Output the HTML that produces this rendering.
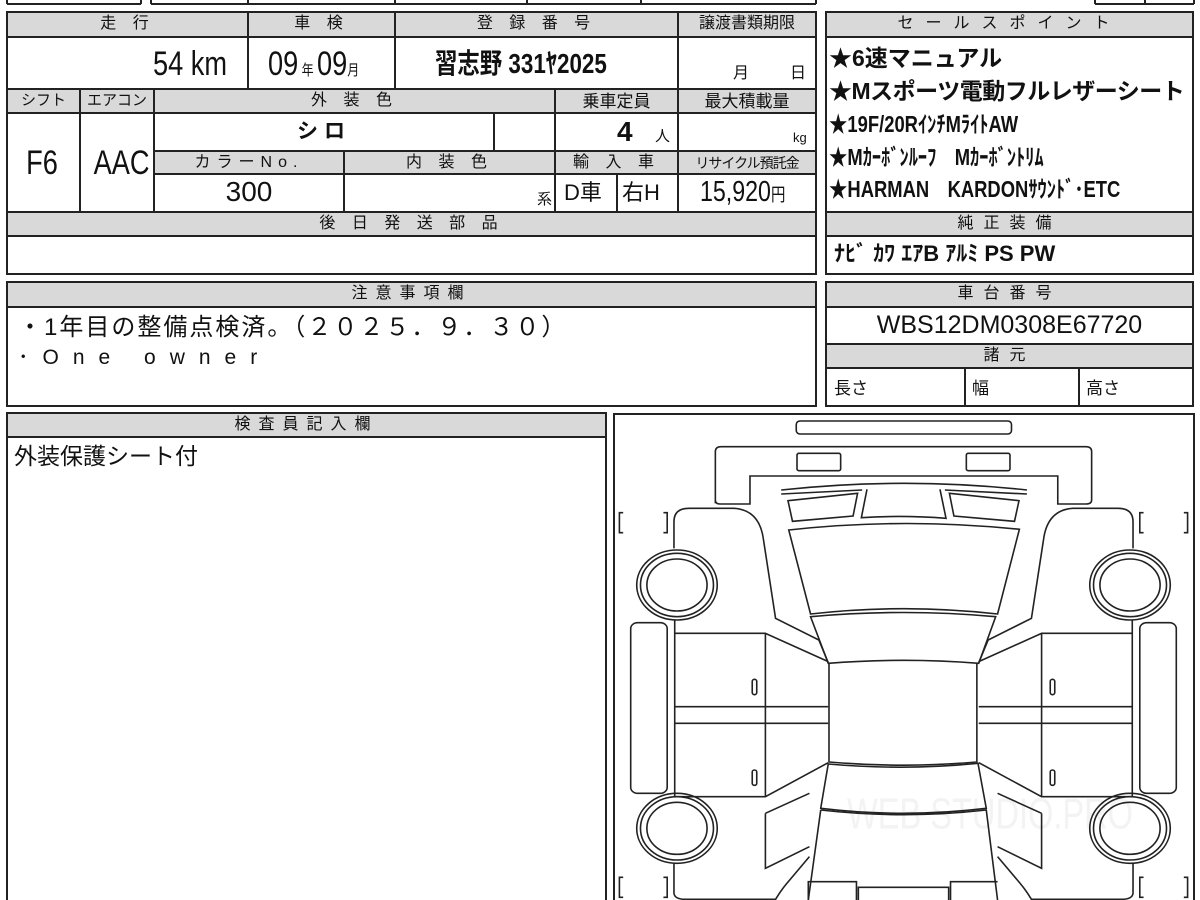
<!DOCTYPE html>
<html><head><meta charset="utf-8"><style>
body{margin:0;width:1200px;height:900px;overflow:hidden;background:#fff;position:relative;font-family:"Liberation Sans","Noto Sans CJK JP",sans-serif;color:#111}
.t{position:absolute;white-space:nowrap;line-height:1;transform-origin:0 0}
.c{text-align:center}
.h{font-size:16px;letter-spacing:6px}
.n{transform:scaleX(.8)}
</style></head><body>
<svg width="1200" height="900" style="position:absolute;left:0;top:0" xmlns="http://www.w3.org/2000/svg">
<g fill="#d9d9d9">
<rect x="7" y="12" width="809" height="25"/>
<rect x="7" y="89" width="809" height="24"/>
<rect x="154" y="151" width="662" height="23"/>
<rect x="7" y="212" width="809" height="24"/>
<rect x="826" y="12" width="367" height="25"/>
<rect x="826" y="212" width="367" height="24"/>
<rect x="826" y="282" width="367" height="25"/>
<rect x="826" y="344" width="367" height="24"/>
<rect x="7" y="282" width="809" height="25"/>
<rect x="7" y="413" width="599" height="24"/>
</g>
<g stroke="#222" stroke-width="2" fill="none">
<path d="M7,0V4M141,0V4M151,0V4M248,0V4M395,0V4M527,0V4M641,0V4M816,0V4M7,4H141M151,4H816M1095,0V4M1145,0V4M1194,0V4M1095,4H1194"/>
<rect x="7" y="12" width="809" height="262"/>
<path d="M7,37H816M7,89H816M7,113H816M154,151H816M154,174H816M7,212H816M7,236H816"/>
<path d="M248,12V89M395,12V89M678,12V212M80,89V212M154,89V212M555,89V212M494,113V151M344,151V212M617,174V212"/>
<rect x="826" y="12" width="367" height="262"/>
<path d="M826,37H1193M826,212H1193M826,236H1193"/>
<rect x="826" y="282" width="367" height="124"/>
<path d="M826,307H1193M826,344H1193M826,368H1193M965,368V406M1079,368V406"/>
<rect x="7" y="282" width="809" height="124"/>
<path d="M7,307H816"/>
<rect x="7" y="413" width="599" height="500"/>
<path d="M7,437H606"/>
<rect x="614" y="414" width="580" height="500"/>
</g>
</svg>
<svg width="590" height="490" viewBox="0 0 1568 1470" preserveAspectRatio="none" style="position:absolute;left:610px;top:410px" xmlns="http://www.w3.org/2000/svg">
<text x="630" y="1255" font-size="130" fill="#f3f3f3" font-family="Liberation Sans" textLength="760" lengthAdjust="spacingAndGlyphs">WEB STUDIO.PRO</text>
<g fill="none" stroke="#222" stroke-width="1.6">
<rect x="495" y="33" width="572" height="39" rx="10" vector-effect="non-scaling-stroke"/>
<path vector-effect="non-scaling-stroke" d="M280,280 L280,125 Q280,110 295,110 L1265,110 Q1280,110 1280,125 L1280,270 Q1280,282 1265,282 L1190,282 L1190,198 L372,198 L372,282 L292,282 Q280,282 280,270 Z"/>
<rect x="497" y="130" width="116" height="52" rx="5" vector-effect="non-scaling-stroke"/>
<rect x="947" y="130" width="116" height="52" rx="5" vector-effect="non-scaling-stroke"/>
<path vector-effect="non-scaling-stroke" d="M455,240 Q780,200 1108,240 M455,252 L670,240 M890,240 L1108,252"/>
<path vector-effect="non-scaling-stroke" d="M473,272 L658,250 L646,318 L485,334 Z M1087,272 L902,250 L914,318 L1075,334 Z"/>
<path vector-effect="non-scaling-stroke" d="M683,238 L668,323 Q780,315 893,325 L877,238"/>
<path vector-effect="non-scaling-stroke" d="M475,360 Q780,322 1088,358 L1030,612 Q780,580 533,612 Z"/>
<path vector-effect="non-scaling-stroke" d="M533,620 Q780,595 1025,620 L980,760 Q780,742 580,760 Z"/>
<path vector-effect="non-scaling-stroke" d="M582,760 L582,1056 Q780,1075 975,1056 L975,760"/>
<path vector-effect="non-scaling-stroke" d="M580,1062 Q780,1082 978,1060 L1000,1195 Q780,1225 560,1195 Z"/>
<path vector-effect="non-scaling-stroke" d="M560,1200 Q780,1228 1000,1200 L1030,1470 M560,1200 L527,1470"/>
<path vector-effect="non-scaling-stroke" d="M527,1470 V1415 H655 V1470 M905,1470 V1415 H1030 M660,1470 V1432 H900 V1470"/>
<g id="L">
<path vector-effect="non-scaling-stroke" d="M170,415 L170,335 Q170,295 210,295 L330,295 Q398,300 408,390 L440,625 L555,690 L580,758"/>
<path vector-effect="non-scaling-stroke" d="M172,670 H413 L580,755 M413,670 V1160 M172,890 H580 M172,940 H580 M172,1160 H413 L580,1058 M172,630 V1160"/>
<path vector-effect="non-scaling-stroke" d="M413,1210 L530,1150 M413,1210 V1375 L530,1310 M170,1360 V1450 Q172,1468 200,1468 L440,1468 Q455,1440 470,1420 L530,1340"/>
<rect x="55" y="638" width="97" height="512" rx="18" vector-effect="non-scaling-stroke"/>
<ellipse cx="178" cy="525" rx="107" ry="105" vector-effect="non-scaling-stroke"/>
<ellipse cx="178" cy="525" rx="97" ry="95" vector-effect="non-scaling-stroke"/>
<ellipse cx="178" cy="525" rx="80" ry="78" vector-effect="non-scaling-stroke"/>
<ellipse cx="178" cy="1255" rx="107" ry="105" vector-effect="non-scaling-stroke"/>
<ellipse cx="178" cy="1255" rx="97" ry="95" vector-effect="non-scaling-stroke"/>
<ellipse cx="178" cy="1255" rx="80" ry="78" vector-effect="non-scaling-stroke"/>
<path vector-effect="non-scaling-stroke" d="M35,308 H25 V368 H35 M142,308 H152 V368 H142 M35,1402 H25 V1462 H35 M142,1402 H152 V1462 H142"/>
<rect x="378" y="808" width="12" height="46" rx="6" vector-effect="non-scaling-stroke"/>
<rect x="378" y="1080" width="12" height="46" rx="6" vector-effect="non-scaling-stroke"/>
</g>
<use href="#L" transform="translate(1560,0) scale(-1,1)"/>
</g>
</svg>

<div class="t h c" style="left:7px;width:241px;top:16px">走 行</div>
<div class="t h c" style="left:248px;width:147px;top:16px">車 検</div>
<div class="t h c" style="left:395px;width:283px;top:16px">登 録 番 号</div>
<div class="t c" style="left:678px;width:138px;top:16px;font-size:16px">譲渡書類期限</div>
<div class="t n" style="left:153px;top:47px;font-size:34px">54 km</div>
<div class="t n" style="left:268px;top:47px;font-size:34px">09<span style="font-size:15px"> 年 </span>09<span style="font-size:15px">月</span></div>
<div class="t n" style="left:435px;top:50px;font-size:28px;font-weight:bold">習志野 331ﾔ2025</div>
<div class="t" style="left:733px;top:66px;font-size:16px">月</div>
<div class="t" style="left:790px;top:66px;font-size:16px">日</div>
<div class="t c" style="left:7px;width:73px;top:93px;font-size:15px">シフト</div>
<div class="t c" style="left:80px;width:74px;top:93px;font-size:15px">エアコン</div>
<div class="t h c" style="left:154px;width:401px;top:93px">外 装 色</div>
<div class="t c" style="left:555px;width:123px;top:93px;font-size:17px">乗車定員</div>
<div class="t c" style="left:678px;width:138px;top:93px;font-size:17px">最大積載量</div>
<div class="t c n" style="left:10px;width:80px;top:146px;font-size:34px">F6</div>
<div class="t c n" style="left:88px;width:84px;top:146px;font-size:34px">AAC</div>
<div class="t h c" style="left:154px;width:340px;top:121px;font-size:21px;font-weight:bold">シロ</div>
<div class="t" style="left:617px;top:118px;font-size:28px;font-weight:bold">4</div>
<div class="t" style="left:655px;top:129px;font-size:15px">人</div>
<div class="t" style="left:793px;top:131px;font-size:13px">kg</div>
<div class="t h c" style="left:154px;width:190px;top:155px">カラーNo.</div>
<div class="t h c" style="left:344px;width:211px;top:155px">内 装 色</div>
<div class="t h c" style="left:555px;width:123px;top:155px">輸 入 車</div>
<div class="t c" style="left:678px;width:138px;top:156px;font-size:14px;letter-spacing:-1px">リサイクル預託金</div>
<div class="t c" style="left:154px;width:190px;top:178px;font-size:28px">300</div>
<div class="t" style="left:537px;top:192px;font-size:15px">系</div>
<div class="t" style="left:564px;top:182px;font-size:22px">D車</div>
<div class="t" style="left:622px;top:182px;font-size:22px">右H</div>
<div class="t n" style="left:700px;top:178px;font-size:29px">15,920<span style="font-size:18px">円</span></div>
<div class="t h c" style="left:7px;width:809px;top:216px">後 日 発 送 部 品</div>

<div class="t h c" style="left:826px;width:367px;top:16px;letter-spacing:12px">セールスポイント</div>
<div class="t" style="left:829px;top:47px;font-size:23px;font-weight:bold">★6速マニュアル</div>
<div class="t" style="left:829px;top:80px;font-size:23px;font-weight:bold;letter-spacing:-0.5px">★Mスポーツ電動フルレザーシート</div>
<div class="t n" style="left:829px;top:113px;font-size:23px;font-weight:bold">★19F/20RｲﾝﾁMﾗｲﾄAW</div>
<div class="t n" style="left:829px;top:146px;font-size:23px;font-weight:bold">★Mｶｰﾎﾞﾝﾙｰﾌ　Mｶｰﾎﾞﾝﾄﾘﾑ</div>
<div class="t n" style="left:829px;top:178px;font-size:23px;font-weight:bold">★HARMAN　KARDONｻｳﾝﾄﾞ･ETC</div>
<div class="t h c" style="left:826px;width:367px;top:216px;letter-spacing:10px">純正装備</div>
<div class="t" style="left:834px;top:243px;font-size:22px;font-weight:bold">ﾅﾋﾞ  ｶﾜ ｴｱB ｱﾙﾐ PS PW</div>
<div class="t h c" style="left:826px;width:367px;top:286px;letter-spacing:10px">車台番号</div>
<div class="t c" style="left:826px;width:367px;top:313px;font-size:25px">WBS12DM0308E67720</div>
<div class="t h c" style="left:826px;width:367px;top:348px;letter-spacing:10px">諸元</div>
<div class="t" style="left:834px;top:380px;font-size:17px">長さ</div>
<div class="t" style="left:972px;top:380px;font-size:17px">幅</div>
<div class="t" style="left:1086px;top:380px;font-size:17px">高さ</div>

<div class="t h c" style="left:7px;width:809px;top:286px;letter-spacing:8px">注意事項欄</div>
<div class="t" style="left:18px;top:316px;font-size:24px;letter-spacing:2px">・1年目の整備点検済。（２０２５．９．３０）</div>
<div class="t" style="left:18px;top:347px;font-size:21px;letter-spacing:14px">･One owner</div>
<div class="t h c" style="left:7px;width:599px;top:417px;letter-spacing:8px">検査員記入欄</div>
<div class="t" style="left:14px;top:445px;font-size:23px">外装保護シート付</div>
</body></html>
